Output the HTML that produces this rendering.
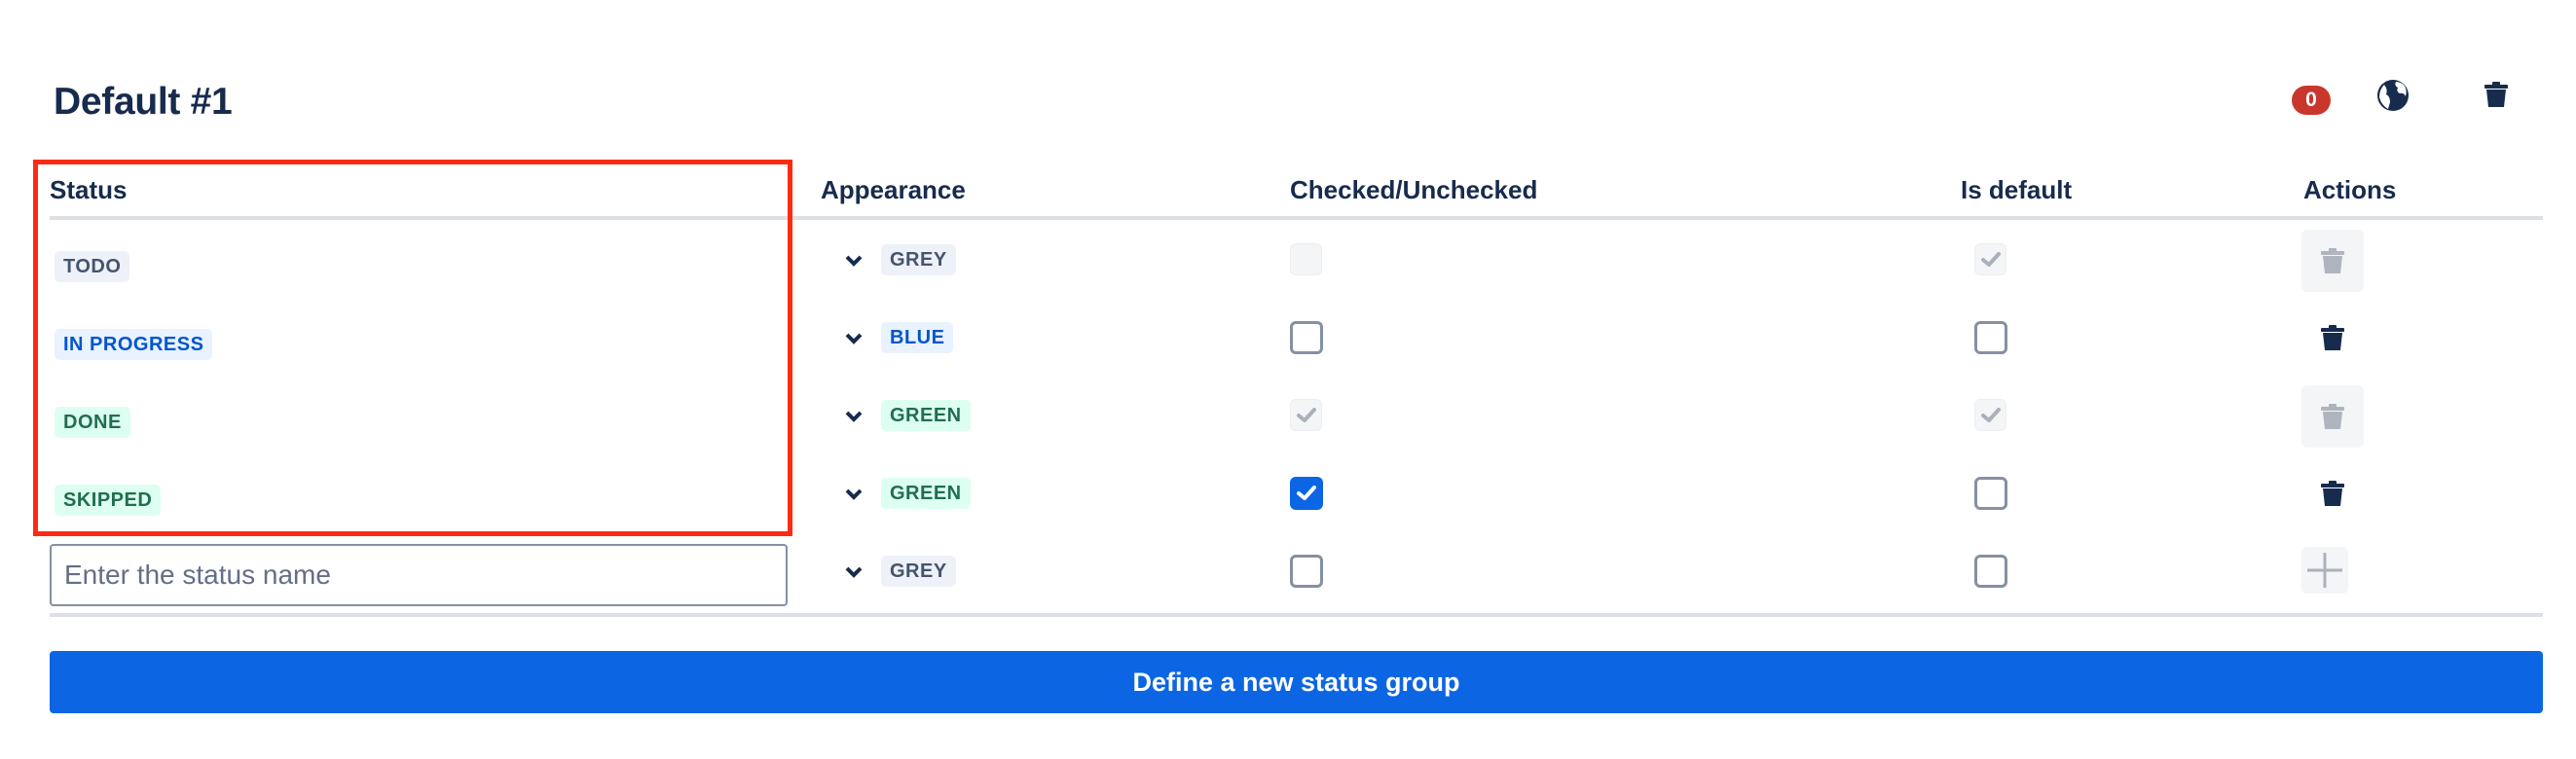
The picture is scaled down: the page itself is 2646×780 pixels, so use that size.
<!DOCTYPE html>
<html><head><meta charset="utf-8"><style>
*{margin:0;padding:0;box-sizing:border-box}
body{width:2646px;height:780px;background:#fff;position:relative;overflow:hidden;font-family:"Liberation Sans",sans-serif;color:#172b4d}
.a{position:absolute}
.h{font-weight:bold;font-size:26px;top:180px}
.tag{position:absolute;height:32px;line-height:32px;padding:0 9px;border-radius:5px;font-weight:bold;font-size:20px;letter-spacing:0.5px}
.g{background:#eef1f7;color:#44546f}
.b{background:#e9f2ff;color:#0055cc}
.gr{background:#dcfff1;color:#216e4e}
.cb{position:absolute;width:34px;height:34px;border:3px solid #8590a2;border-radius:6px;background:#fff}
.cbd{position:absolute;width:33px;height:33px;border-radius:6px;background:#f4f5f7;border:1px solid #eceef1}
.chev{position:absolute;left:868px}
.line{position:absolute;left:51px;width:2561px;height:4px;background:#dcdfe4}
</style></head><body>
<div class="a" style="left:55px;top:83px;font-size:39px;font-weight:bold;letter-spacing:-0.3px">Default #1</div>

<div class="a" style="left:2354px;top:88px;width:40px;height:30px;border-radius:15px;background:#c9372c;color:#fff;font-weight:bold;font-size:21px;text-align:center;line-height:30px">0</div>
<svg class="a" style="left:2440px;top:80px" width="36" height="36" viewBox="0 0 36 36"><circle cx="18" cy="18" r="16" fill="#172b4d"/><path d="M9 7 Q13 12 11 17 Q15 19 15 25 L13 32 Q6 28 4 20 Q4 12 9 7Z M21 4 Q19 8 23 10 Q21 14 25 16 Q29 15 31 19 Q33 12 29 7 Q25 4 21 4Z" fill="#fff"/></svg>
<svg class="a" style="left:2552px;top:84px" width="24" height="26" viewBox="0 0 24 26"><rect x="0" y="3" width="24" height="4" rx="1" fill="#172b4d"/><rect x="8" y="0" width="8" height="4" rx="1" fill="#172b4d"/><path d="M2 8 H22 L20 26 H4Z" fill="#172b4d"/></svg>

<div class="a h" style="left:51px">Status</div>
<div class="a h" style="left:843px">Appearance</div>
<div class="a h" style="left:1325px">Checked/Unchecked</div>
<div class="a h" style="left:2014px">Is default</div>
<div class="a h" style="left:2366px">Actions</div>
<div class="line" style="top:222px"></div>

<div class="tag g" style="left:56px;top:258px">TODO</div>
<div class="tag b" style="left:56px;top:338px">IN PROGRESS</div>
<div class="tag gr" style="left:56px;top:418px">DONE</div>
<div class="tag gr" style="left:56px;top:498px">SKIPPED</div>
<div class="a" style="left:51px;top:559px;width:758px;height:64px;border:2px solid #8590a2;border-radius:4px;font-size:28px;color:#626f86;padding-left:13px;line-height:60px">Enter the status name</div>

<div class="a" style="left:34px;top:164px;width:780px;height:387px;border:5px solid #ff2a12"></div>

<svg width="0" height="0" style="position:absolute"><defs>
<symbol id="ch" viewBox="0 0 18 12"><path d="M2 2 L9 9 L16 2" fill="none" stroke="#172b4d" stroke-width="4"/></symbol>
<symbol id="tr" viewBox="0 0 24 26"><rect x="0" y="3" width="24" height="4" rx="1"/><rect x="8" y="0" width="8" height="4" rx="1"/><path d="M2 8 H22 L20 26 H4Z"/></symbol>
<symbol id="ck" viewBox="0 0 20 16"><path d="M2 8 L8 13 L18 2" fill="none" stroke-width="4" stroke-linecap="round" stroke-linejoin="round"/></symbol>
</defs></svg>

<svg class="chev" style="top:262px" width="18" height="12"><use href="#ch"/></svg>
<svg class="chev" style="top:342px" width="18" height="12"><use href="#ch"/></svg>
<svg class="chev" style="top:422px" width="18" height="12"><use href="#ch"/></svg>
<svg class="chev" style="top:502px" width="18" height="12"><use href="#ch"/></svg>
<svg class="chev" style="top:582px" width="18" height="12"><use href="#ch"/></svg>

<div class="tag g" style="left:905px;top:251px">GREY</div>
<div class="tag b" style="left:905px;top:331px">BLUE</div>
<div class="tag gr" style="left:905px;top:411px">GREEN</div>
<div class="tag gr" style="left:905px;top:491px">GREEN</div>
<div class="tag g" style="left:905px;top:571px">GREY</div>

<div class="cbd" style="left:1325px;top:250px"></div>
<div class="cb" style="left:1325px;top:330px"></div>
<div class="cbd" style="left:1325px;top:410px"><svg style="position:absolute;left:6px;top:8px" width="20" height="16" stroke="#aab1bb"><use href="#ck"/></svg></div>
<div class="cb" style="left:1325px;top:490px;background:#0c66e4;border-color:#0c66e4"><svg style="position:absolute;left:4px;top:6px" width="20" height="16" stroke="#fff"><use href="#ck"/></svg></div>
<div class="cb" style="left:1325px;top:570px"></div>

<div class="cbd" style="left:2028px;top:250px"><svg style="position:absolute;left:6px;top:8px" width="20" height="16" stroke="#aab1bb"><use href="#ck"/></svg></div>
<div class="cb" style="left:2028px;top:330px"></div>
<div class="cbd" style="left:2028px;top:410px"><svg style="position:absolute;left:6px;top:8px" width="20" height="16" stroke="#aab1bb"><use href="#ck"/></svg></div>
<div class="cb" style="left:2028px;top:490px"></div>
<div class="cb" style="left:2028px;top:570px"></div>

<div class="a" style="left:2364px;top:236px;width:64px;height:64px;background:#f4f5f7;border-radius:6px"><svg style="position:absolute;left:20px;top:19px" width="24" height="26" fill="#aeb5be"><use href="#tr"/></svg></div>
<svg class="a" style="left:2384px;top:334px" width="24" height="26" fill="#172b4d"><use href="#tr"/></svg>
<div class="a" style="left:2364px;top:396px;width:64px;height:64px;background:#f4f5f7;border-radius:6px"><svg style="position:absolute;left:20px;top:19px" width="24" height="26" fill="#aeb5be"><use href="#tr"/></svg></div>
<svg class="a" style="left:2384px;top:494px" width="24" height="26" fill="#172b4d"><use href="#tr"/></svg>
<div class="a" style="left:2364px;top:562px;width:48px;height:48px;background:#f4f5f7;border-radius:6px"><svg style="position:absolute;left:4px;top:4px" width="40" height="40"><path d="M20 2 V38 M2 20 H38" stroke="#aab1bb" stroke-width="3"/></svg></div>

<div class="line" style="top:630px"></div>

<div class="a" style="left:51px;top:669px;width:2561px;height:64px;background:#0c66e4;border-radius:4px;color:#fff;font-size:27px;font-weight:bold;text-align:center;line-height:64px">Define a new status group</div>
</body></html>
